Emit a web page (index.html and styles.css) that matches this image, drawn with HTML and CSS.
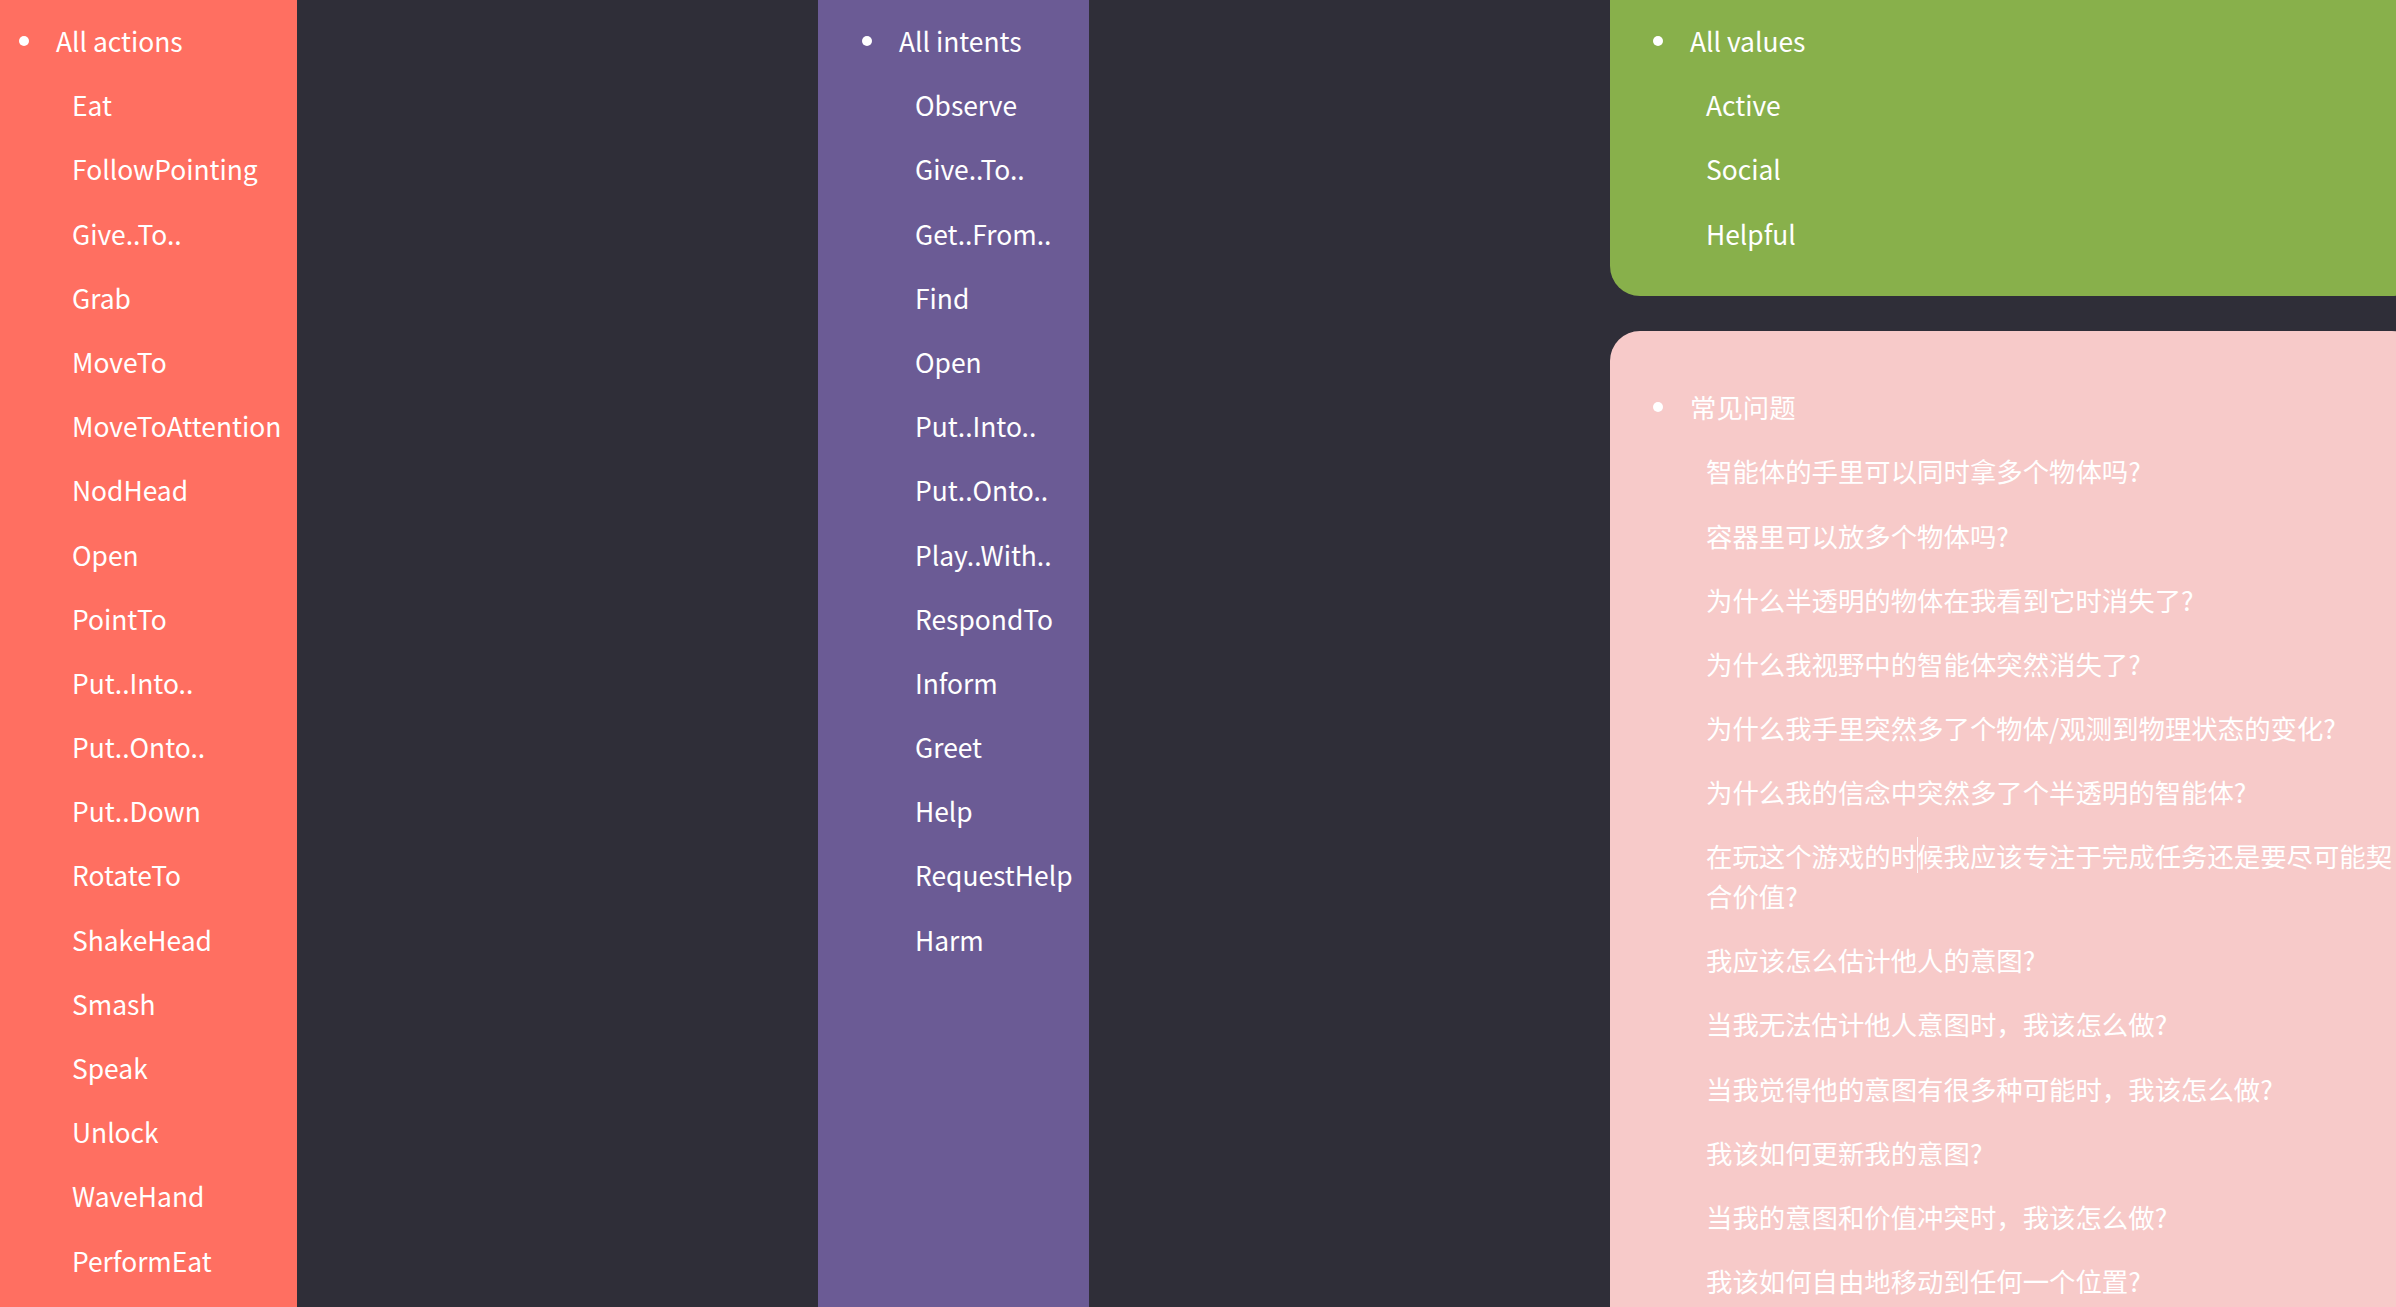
FILE: index.html
```html
<!DOCTYPE html>
<html lang="zh-CN">
<head>
<meta charset="utf-8">
<title>Actions, intents and values</title>
<link rel="stylesheet" href="styles.css">
</head>
<body>
<div class="page">
  <section class="col col-actions">
    <ul class="list">
      <li class="head">All actions</li>
      <li class="item">Eat</li>
      <li class="item">FollowPointing</li>
      <li class="item">Give..To..</li>
      <li class="item">Grab</li>
      <li class="item">MoveTo</li>
      <li class="item">MoveToAttention</li>
      <li class="item">NodHead</li>
      <li class="item">Open</li>
      <li class="item">PointTo</li>
      <li class="item">Put..Into..</li>
      <li class="item">Put..Onto..</li>
      <li class="item">Put..Down</li>
      <li class="item">RotateTo</li>
      <li class="item">ShakeHead</li>
      <li class="item">Smash</li>
      <li class="item">Speak</li>
      <li class="item">Unlock</li>
      <li class="item">WaveHand</li>
      <li class="item">PerformEat</li>
    </ul>
  </section>
  <section class="col col-intents">
    <ul class="list">
      <li class="head">All intents</li>
      <li class="item">Observe</li>
      <li class="item">Give..To..</li>
      <li class="item">Get..From..</li>
      <li class="item">Find</li>
      <li class="item">Open</li>
      <li class="item">Put..Into..</li>
      <li class="item">Put..Onto..</li>
      <li class="item">Play..With..</li>
      <li class="item">RespondTo</li>
      <li class="item">Inform</li>
      <li class="item">Greet</li>
      <li class="item">Help</li>
      <li class="item">RequestHelp</li>
      <li class="item">Harm</li>
    </ul>
  </section>
  <div class="side">
    <section class="panel panel-values">
      <ul class="list">
        <li class="head">All values</li>
        <li class="item">Active</li>
        <li class="item">Social</li>
        <li class="item">Helpful</li>
      </ul>
    </section>
    <section class="panel panel-faq">
      <ul class="list">
        <li class="head">常见问题</li>
        <li class="item">智能体的手里可以同时拿多个物体吗?</li>
        <li class="item">容器里可以放多个物体吗?</li>
        <li class="item">为什么半透明的物体在我看到它时消失了?</li>
        <li class="item">为什么我视野中的智能体突然消失了?</li>
        <li class="item">为什么我手里突然多了个物体/观测到物理状态的变化?</li>
        <li class="item">为什么我的信念中突然多了个半透明的智能体?</li>
        <li class="item caret-line">在玩这个游戏的时候我应该专注于完成任务还是要尽可能契合价值?</li>
        <li class="item">我应该怎么估计他人的意图?</li>
        <li class="item">当我无法估计他人意图时，我该怎么做?</li>
        <li class="item">当我觉得他的意图有很多种可能时，我该怎么做?</li>
        <li class="item">我该如何更新我的意图?</li>
        <li class="item">当我的意图和价值冲突时，我该怎么做?</li>
        <li class="item">我该如何自由地移动到任何一个位置?</li>
      </ul>
    </section>
  </div>
</div>
</body>
</html>
```
FILE: styles.css
```css
html, body {
  margin: 0;
  padding: 0;
  background: #2f2e38;
  overflow: hidden;
}

body {
  font-family: "Noto Sans CJK SC", "Noto Sans", sans-serif;
  font-size: 26.4px;
  color: #ffffff;
}

.page {
  display: flex;
  align-items: stretch;
  gap: 521px;
  margin-top: -36px;
  min-height: calc(100vh + 36px);
  width: 2500px;
}

.col {
  flex: 0 0 auto;
  box-sizing: border-box;
  padding-top: 57px;
}

.col-actions {
  width: 297px;
  background: #ff6f61;
  padding-left: 19px;
}

.col-intents {
  width: 271px;
  background: #6b5b95;
  padding-left: 44px;
}

.side {
  flex: 0 0 812px;
  display: flex;
  flex-direction: column;
  gap: 35px;
}

.panel {
  box-sizing: border-box;
  border-radius: 30px;
  padding: 57px 0 43px 43px;
}

.panel-values {
  background: #88b04b;
}

.panel-faq {
  background: #f7cac9;
  flex: 1 1 auto;
  padding-top: 56px;
}

.list {
  list-style: none;
  margin: 0;
  padding: 0;
  display: flex;
  flex-direction: column;
  gap: 24.6px;
  line-height: 39.6px;
  white-space: nowrap;
}

.panel-faq .list {
  white-space: normal;
  width: 754px;
}

.head {
  display: flex;
  align-items: center;
}

.head::before {
  content: "";
  flex: 0 0 auto;
  width: 10px;
  height: 10px;
  border-radius: 50%;
  background: #ffffff;
  margin-right: 27px;
  margin-top: 1px;
}

.item {
  padding-left: 53px;
}

.caret-line {
  position: relative;
}

.caret-line::after {
  content: "";
  position: absolute;
  left: 264.2px;
  top: 1px;
  width: 1px;
  height: 36px;
  background: rgba(255, 255, 255, 0.85);
}
```
